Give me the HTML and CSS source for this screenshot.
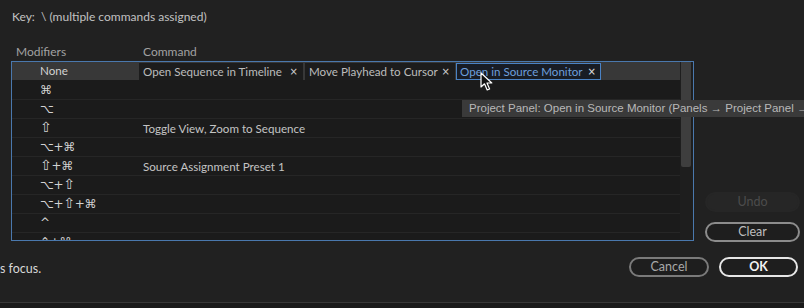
FILE: index.html
```html
<!DOCTYPE html>
<html>
<head>
<meta charset="utf-8">
<link rel="stylesheet" href="styles.css">
</head>
<body>
<div class="key">Key:&nbsp; \ (multiple commands assigned)</div>
<div class="main">
  <div class="left">
    <div class="heads"><span class="h-mod">Modifiers</span><span class="h-cmd">Command</span></div>
    <div class="table">
      <div class="rows">
        <div class="row sel">
          <div class="mod">None</div>
          <div class="cmds">
            <span class="chip c1"><span class="t">Open Sequence in Timeline</span><span class="x">×</span></span>
            <span class="chip c2"><span class="t">Move Playhead to Cursor</span><span class="x">×</span></span>
            <span class="chip c3 active"><span class="t">Open in Source Monitor</span><span class="x">×</span></span>
          </div>
        </div>
        <div class="row"><div class="mod sym">⌘</div><div class="cmd"></div></div>
        <div class="row"><div class="mod sym">⌥</div><div class="cmd"></div></div>
        <div class="row"><div class="mod sym"><span class="sh">⇧</span></div><div class="cmd">Toggle View, Zoom to Sequence</div></div>
        <div class="row"><div class="mod sym">⌥+⌘</div><div class="cmd"></div></div>
        <div class="row"><div class="mod sym"><span class="sh">⇧</span>+⌘</div><div class="cmd">Source Assignment Preset 1</div></div>
        <div class="row"><div class="mod sym">⌥+<span class="sh">⇧</span></div><div class="cmd"></div></div>
        <div class="row"><div class="mod sym">⌥+<span class="sh">⇧</span>+⌘</div><div class="cmd"></div></div>
        <div class="row"><div class="mod sym">^</div><div class="cmd"></div></div>
        <div class="row"><div class="mod sym">⌃+⌘</div><div class="cmd"></div></div>
      </div>
      <div class="scroll"><div class="thumb"></div></div>
    </div>
  </div>
  <div class="side">
    <button class="btn undo">Undo</button>
    <button class="btn">Clear</button>
  </div>
</div>
<div class="footer">
  <span class="focus">s focus.</span>
  <div class="actions">
    <button class="btn cancel">Cancel</button>
    <button class="btn ok">OK</button>
  </div>
</div>
<div class="bottombar"></div>
<div class="tooltip">Project Panel: Open in Source Monitor (Panels → Project Panel →</div>
<svg class="cursor" width="14" height="20" viewBox="0 0 14 20"><path d="M1 1 L1 15 L4.5 11.8 L7.2 18 L9.6 17 L7 11 L11.8 11 Z" fill="#111" stroke="#fff" stroke-width="1.2" stroke-linejoin="round"/></svg>
</body>
</html>
```
FILE: styles.css
```css
* { box-sizing: border-box; }
html, body { margin: 0; padding: 0; }
body {
  width: 804px; height: 308px; overflow: hidden;
  background: #212121;
  font-family: "Lato", "Open Sans", sans-serif;
  font-size: 11.6px;
  color: #c8c8c8;
  position: relative;
}
.key { padding: 9px 0 0 12px; height: 44px; color: #c2c2c2; font-size: 12px; }
.main { display: flex; gap: 11px; height: 197px; }
.left { margin-left: 11px; width: 683px; }
.heads { height: 17px; color: #a2a2a2; display: flex; font-size: 12px; }
.h-mod { width: 132px; padding-left: 5px; }
.table {
  height: 180px; border: 1px solid #4a78ad; background: #1b1b1b;
  display: flex; overflow: hidden;
}
.rows { flex: 1; }
.row { height: 19px; display: flex; align-items: center; border-bottom: 1px solid #262626; }
.row.sel { background: #383838; border-bottom-color: #1b1b1b; align-items: stretch; }
.mod { width: 127px; padding-left: 28px; color: #d2d2d2; line-height: 18px; white-space: nowrap; }
.sym { font-family: "DejaVu Sans", sans-serif; font-size: 12px; letter-spacing: -0.3px; }
.sh { font-size: 14px; line-height: 10px; }
.cmd { padding-left: 4px; color: #c4c4c4; white-space: nowrap; }
.cmds { display: flex; gap: 2px; padding: 1px 0; }
.chip {
  display: flex; justify-content: space-between; align-items: center;
  background: #1c1c1c; color: #bcbcbc; padding: 0 5px 0 4px; height: 17px; flex: none;
}
.chip .t { white-space: nowrap; }
.chip .x { font-family: "DejaVu Sans", sans-serif; font-size: 10px; color: #d0d0d0; }
.c1 { width: 164px; }
.c2 { width: 150px; }
.c3 { width: 145px; margin-left: -1px; }
.chip.active { border: 1px solid #4a82c4; background: #181c24; color: #6d9fdc; padding-left: 3px; padding-right: 4px; }
.chip.active .x { color: #e0e0e0; }
.scroll { width: 13px; background: #1e1e1e; padding: 0 2px 0 1px; }
.thumb { height: 105px; background: #3e3e3e; border-radius: 0 0 2px 2px; }
.side { display: flex; flex-direction: column; gap: 10px; padding-top: 148px; }
.btn {
  font-family: "Lato", "Open Sans", sans-serif; font-size: 12.5px;
  width: 95px; height: 20px; border-radius: 10px;
  border: 2px solid #8c8c8c; background: #1e1e1e; color: #bdbdbd;
  padding: 0; line-height: 16px;
}
.btn.undo { border-color: #262626; background: #262626; color: #4c4c4c; }
.footer { display: flex; justify-content: space-between; align-items: center; height: 40px; padding-top: 12px; }
.focus { color: #d8d8d8; font-size: 12.5px; margin-top: 2px; }
.actions { display: flex; gap: 10px; padding-right: 6px; }
.btn.cancel { width: 80px; border-color: #7a7a7a; color: #a8a8a8; }
.btn.ok { width: 79px; border-color: #e6e6e6; color: #f2f2f2; font-weight: 700; }
.bottombar { position: absolute; left: 0; right: 0; top: 302px; height: 6px; background: #1a1a1a; border-top: 1px solid #383838; }
.tooltip {
  position: absolute; left: 462px; top: 100px; width: 360px; height: 17px;
  background: #3a3a3a; color: #b8b8b8; padding-left: 7px;
  font-family: "Liberation Sans", Arial, sans-serif; font-size: 11.5px; line-height: 17px; white-space: nowrap;
}
.cursor { position: absolute; left: 480px; top: 72px; }
```
